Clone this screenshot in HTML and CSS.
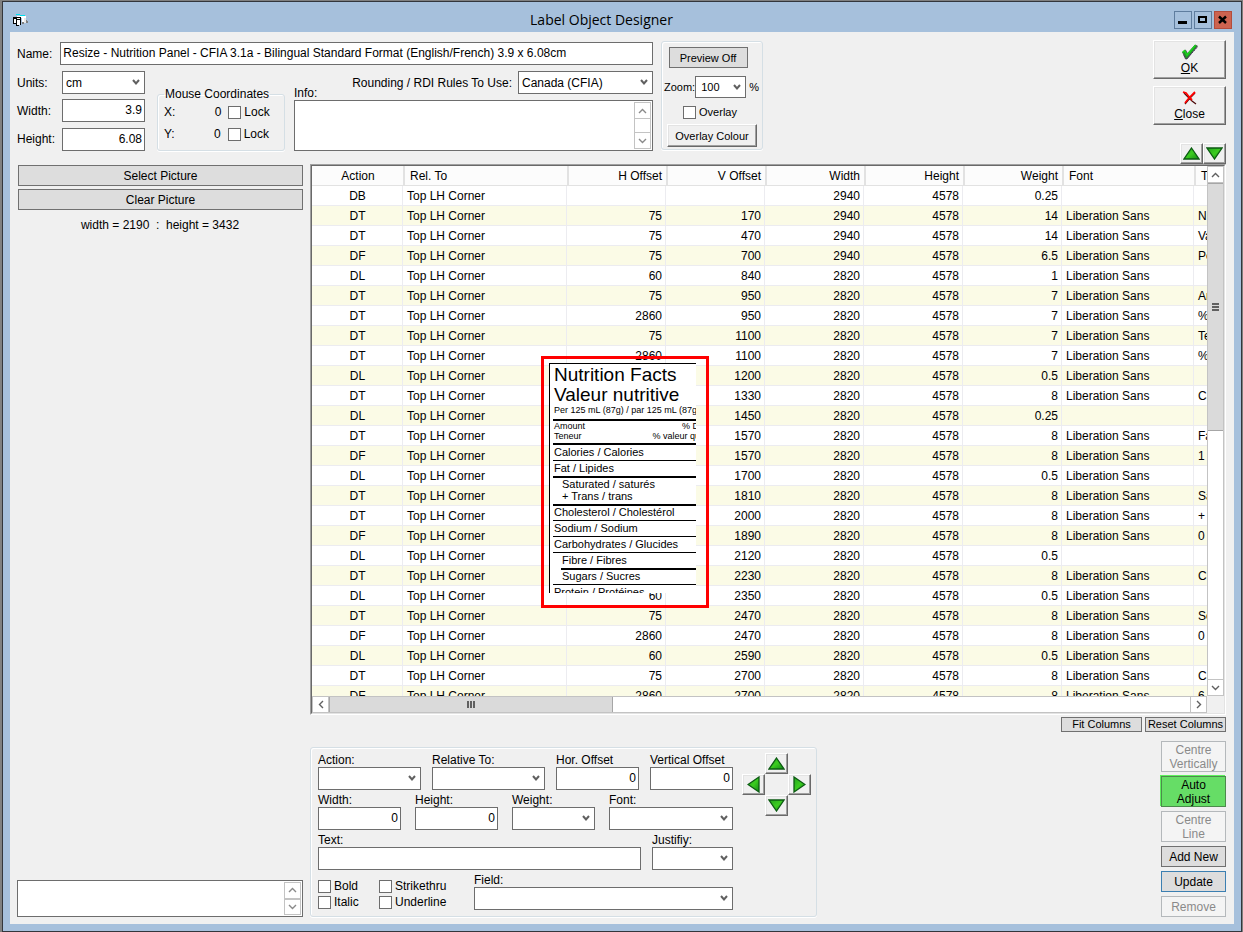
FILE: index.html
```html
<!DOCTYPE html>
<html lang="en">
<head>
    <meta charset="UTF-8">
    <meta name="viewport" content="width=device-width, initial-scale=1.0">
    <title>Label Object Designer</title>
    <link rel="stylesheet" href="styles.css">
</head>
<body>
    <!-- Shared icons -->
    <svg class="icon-defs" aria-hidden="true">
        <defs>
            <linearGradient id="green" x1="0" y1="0" x2="1" y2="1">
                <stop offset="0" stop-color="#22a41c"/>
                <stop offset="0.5" stop-color="#3ccc20"/>
                <stop offset="1" stop-color="#128a14"/>
            </linearGradient>
        </defs>
        <symbol id="arrow-up" viewBox="0 0 17 13">
            <path d="M8.5 1L16 12H1z" fill="url(#green)" stroke="#0b5a12" stroke-width="1.3"/>
        </symbol>
        <symbol id="arrow-down" viewBox="0 0 17 13">
            <path d="M1 1h15L8.500 12z" fill="url(#green)" stroke="#0b5a12" stroke-width="1.3"/>
        </symbol>
        <symbol id="arrow-left" viewBox="0 0 13 17">
            <path d="M12 1v15L1 8.500z" fill="url(#green)" stroke="#0b5a12" stroke-width="1.3"/>
        </symbol>
        <symbol id="arrow-right" viewBox="0 0 13 17">
            <path d="M1 1v15L12 8.500z" fill="url(#green)" stroke="#0b5a12" stroke-width="1.3"/>
        </symbol>
        <symbol id="chevron-up" viewBox="0 0 9 6">
            <path d="M1 5l3.500-3.500L8 5" fill="none" stroke="currentColor" stroke-width="1.4"/>
        </symbol>
        <symbol id="chevron-down" viewBox="0 0 9 6">
            <path d="M1 1l3.500 3.500L8 1" fill="none" stroke="currentColor" stroke-width="1.4"/>
        </symbol>
        <symbol id="chevron-left" viewBox="0 0 6 9">
            <path d="M5 1L1.500 4.500 5 8" fill="none" stroke="currentColor" stroke-width="1.4"/>
        </symbol>
        <symbol id="chevron-right" viewBox="0 0 6 9">
            <path d="M1 1l3.500 3.500L1 8" fill="none" stroke="currentColor" stroke-width="1.4"/>
        </symbol>
    </svg>

    <div class="window">
        <header class="titlebar">
            <svg class="app-icon" viewBox="0 0 16 13" aria-hidden="true" shape-rendering="crispEdges">
                <path d="M4 2h9v7H9V4H4z" fill="#fff"/>
                <path d="M3 0h4v1H3zM7 1h5v1H7z" fill="#00e0f0"/>
                <path d="M13 6h1v1h1v2h-2zM9 8h2v2H9z" fill="#7f7f7f"/>
                <path d="M11 4h2v5h-2z" fill="#e8e8e8"/>
                <path d="M0 3h8v8H6v1H3v-2H0z" fill="#000"/>
                <path d="M1 5h2v4H1zM4 4h3v1H4zM4 6h3v5H4z" fill="#fff"/>
            </svg>
            <h1 class="title">Label Object Designer</h1>
            <div class="window-buttons">
                <button type="button" class="win-btn" aria-label="Minimize">
                    <svg viewBox="0 0 16 16"><path d="M3 9h9v3H3z"/></svg>
                </button>
                <button type="button" class="win-btn" aria-label="Maximize">
                    <svg viewBox="0 0 16 16"><path d="M3 4h9v7H3zM5 6v3h5V6z" fill-rule="evenodd"/></svg>
                </button>
                <button type="button" class="win-btn win-close" aria-label="Close window">
                    <svg viewBox="0 0 16 16"><path d="M4 4.500l7 6.500M11 4.500L4 11" fill="none" stroke="#000" stroke-width="2.400"/></svg>
                </button>
            </div>
        </header>

        <main class="client">
            <section class="top-panel">
                <div class="label-form">
                    <div class="name-row">
                        <label for="name">Name:</label>
                        <input type="text" id="name" value="Resize - Nutrition Panel - CFIA 3.1a - Bilingual Standard Format (English/French) 3.9 x 6.08cm">
                    </div>
                    <div class="detail-row">
                        <div class="size-fields">
                            <label for="units">Units:</label>
                            <select id="units"><option>cm</option></select>
                            <label for="labelWidth">Width:</label>
                            <input type="text" id="labelWidth" class="num" value="3.9">
                            <label for="labelHeight">Height:</label>
                            <input type="text" id="labelHeight" class="num" value="6.08">
                        </div>
                        <fieldset class="mouse-group">
                            <legend>Mouse Coordinates</legend>
                            <div class="mouse-row">
                                <span>X:</span>
                                <span class="mouse-value">0</span>
                                <label class="check"><input type="checkbox">Lock</label>
                            </div>
                            <div class="mouse-row">
                                <span>Y:</span>
                                <span class="mouse-value">0</span>
                                <label class="check"><input type="checkbox">Lock</label>
                            </div>
                        </fieldset>
                        <div class="info-block">
                            <div class="rules-row">
                                <label for="info" class="info-label">Info:</label>
                                <label for="rules" class="rules-label">Rounding / RDI Rules To Use:</label>
                                <select id="rules"><option>Canada (CFIA)</option></select>
                            </div>
                            <div class="memo info-memo">
                                <textarea id="info"></textarea>
                                <div class="memo-scroll">
                                    <span><svg width="9" height="6"><use href="#chevron-up"/></svg></span>
                                    <span><svg width="9" height="6"><use href="#chevron-down"/></svg></span>
                                </div>
                            </div>
                        </div>
                    </div>
                </div>

                <div class="group preview-group">
                    <button type="button" class="btn preview-off">Preview Off</button>
                    <div class="zoom-row">
                        <label for="zoom">Zoom:</label>
                        <select id="zoom"><option>100</option></select>
                        <span>%</span>
                    </div>
                    <label class="check overlay-check"><input type="checkbox">Overlay</label>
                    <button type="button" class="btn-raised overlay-colour">Overlay Colour</button>
                </div>

                <div class="dialog-buttons">
                    <button type="button" class="btn-raised btn-dialog">
                        <svg width="17" height="16" viewBox="0 0 17 16" aria-hidden="true">
                            <path d="M1.500 8l3-2 2 3.500L14 1l2.500 1L6 15H4.500z" fill="#1f9a24" stroke="#4a4a50" stroke-width="0.800"/>
                            <path d="M1.500 8.500l2-2 2.500 4.500L14.500 1" fill="none" stroke="#18d81c" stroke-width="1.300"/>
                            <path d="M3 11.500L5.500 15 16.500 3" fill="none" stroke="#4b2860" stroke-width="0.900" stroke-dasharray="2 1"/>
                        </svg>
                        <span><u>O</u>K</span>
                    </button>
                    <button type="button" class="btn-raised btn-dialog">
                        <svg width="15" height="16" viewBox="0 0 15 16" aria-hidden="true">
                            <path d="M2 3l4 4 4 4 4 3M13 3L8 8l-5 6" fill="none" stroke="#4a0808" stroke-width="1.200"/>
                            <path d="M1 2l3 1 4 5 2 2M13 2L7 8l-4 5" fill="none" stroke="#f00" stroke-width="1.800"/>
                        </svg>
                        <span><u>C</u>lose</span>
                    </button>
                    <div class="order-buttons">
                        <button type="button" class="btn-raised btn-arrow" aria-label="Move up"><svg width="17" height="13"><use href="#arrow-up"/></svg></button>
                        <button type="button" class="btn-raised btn-arrow" aria-label="Move down"><svg width="17" height="13"><use href="#arrow-down"/></svg></button>
                    </div>
                </div>
            </section>

            <div class="workspace">
                <aside class="picture-panel">
                    <button type="button" class="btn">Select Picture</button>
                    <button type="button" class="btn">Clear Picture</button>
                    <p class="picture-size">width = 2190 &nbsp;:&nbsp; height = 3432</p>
                    <div class="memo notes-memo">
                        <textarea aria-label="Notes"></textarea>
                        <div class="memo-scroll">
                            <span><svg width="9" height="6"><use href="#chevron-up"/></svg></span>
                            <span><svg width="9" height="6"><use href="#chevron-down"/></svg></span>
                        </div>
                    </div>
                </aside>

                <section class="objects">
                    <div class="grid-frame">
                        <div class="grid-view">
                            <div class="grid-rows">
                                <table>
                                    <colgroup>
                                        <col class="col-action"><col class="col-rel">
                                        <col class="col-num"><col class="col-num"><col class="col-num"><col class="col-num"><col class="col-num">
                                        <col class="col-font"><col class="col-text">
                                    </colgroup>
                                    <thead>
                                        <tr><th>Action</th><th>Rel. To</th><th>H Offset</th><th>V Offset</th><th>Width</th><th>Height</th><th>Weight</th><th>Font</th><th>Text</th></tr>
                                    </thead>
                                    <tbody>
                                        <tr><td>DB</td><td>Top LH Corner</td><td></td><td></td><td>2940</td><td>4578</td><td>0.25</td><td></td><td></td></tr>
                                        <tr><td>DT</td><td>Top LH Corner</td><td>75</td><td>170</td><td>2940</td><td>4578</td><td>14</td><td>Liberation Sans</td><td>Nu</td></tr>
                                        <tr><td>DT</td><td>Top LH Corner</td><td>75</td><td>470</td><td>2940</td><td>4578</td><td>14</td><td>Liberation Sans</td><td>Va</td></tr>
                                        <tr><td>DF</td><td>Top LH Corner</td><td>75</td><td>700</td><td>2940</td><td>4578</td><td>6.5</td><td>Liberation Sans</td><td>Pe</td></tr>
                                        <tr><td>DL</td><td>Top LH Corner</td><td>60</td><td>840</td><td>2820</td><td>4578</td><td>1</td><td>Liberation Sans</td><td></td></tr>
                                        <tr><td>DT</td><td>Top LH Corner</td><td>75</td><td>950</td><td>2820</td><td>4578</td><td>7</td><td>Liberation Sans</td><td>Am</td></tr>
                                        <tr><td>DT</td><td>Top LH Corner</td><td>2860</td><td>950</td><td>2820</td><td>4578</td><td>7</td><td>Liberation Sans</td><td>%</td></tr>
                                        <tr><td>DT</td><td>Top LH Corner</td><td>75</td><td>1100</td><td>2820</td><td>4578</td><td>7</td><td>Liberation Sans</td><td>Te</td></tr>
                                        <tr><td>DT</td><td>Top LH Corner</td><td>2860</td><td>1100</td><td>2820</td><td>4578</td><td>7</td><td>Liberation Sans</td><td>%</td></tr>
                                        <tr><td>DL</td><td>Top LH Corner</td><td></td><td>1200</td><td>2820</td><td>4578</td><td>0.5</td><td>Liberation Sans</td><td></td></tr>
                                        <tr><td>DT</td><td>Top LH Corner</td><td></td><td>1330</td><td>2820</td><td>4578</td><td>8</td><td>Liberation Sans</td><td>Ca</td></tr>
                                        <tr><td>DL</td><td>Top LH Corner</td><td></td><td>1450</td><td>2820</td><td>4578</td><td>0.25</td><td></td><td></td></tr>
                                        <tr><td>DT</td><td>Top LH Corner</td><td></td><td>1570</td><td>2820</td><td>4578</td><td>8</td><td>Liberation Sans</td><td>Fa</td></tr>
                                        <tr><td>DF</td><td>Top LH Corner</td><td></td><td>1570</td><td>2820</td><td>4578</td><td>8</td><td>Liberation Sans</td><td>1</td></tr>
                                        <tr><td>DL</td><td>Top LH Corner</td><td></td><td>1700</td><td>2820</td><td>4578</td><td>0.5</td><td>Liberation Sans</td><td></td></tr>
                                        <tr><td>DT</td><td>Top LH Corner</td><td></td><td>1810</td><td>2820</td><td>4578</td><td>8</td><td>Liberation Sans</td><td>Sa</td></tr>
                                        <tr><td>DT</td><td>Top LH Corner</td><td></td><td>2000</td><td>2820</td><td>4578</td><td>8</td><td>Liberation Sans</td><td>+</td></tr>
                                        <tr><td>DF</td><td>Top LH Corner</td><td></td><td>1890</td><td>2820</td><td>4578</td><td>8</td><td>Liberation Sans</td><td>0</td></tr>
                                        <tr><td>DL</td><td>Top LH Corner</td><td></td><td>2120</td><td>2820</td><td>4578</td><td>0.5</td><td></td><td></td></tr>
                                        <tr><td>DT</td><td>Top LH Corner</td><td></td><td>2230</td><td>2820</td><td>4578</td><td>8</td><td>Liberation Sans</td><td>Ch</td></tr>
                                        <tr><td>DL</td><td>Top LH Corner</td><td>60</td><td>2350</td><td>2820</td><td>4578</td><td>0.5</td><td>Liberation Sans</td><td></td></tr>
                                        <tr><td>DT</td><td>Top LH Corner</td><td>75</td><td>2470</td><td>2820</td><td>4578</td><td>8</td><td>Liberation Sans</td><td>So</td></tr>
                                        <tr><td>DF</td><td>Top LH Corner</td><td>2860</td><td>2470</td><td>2820</td><td>4578</td><td>8</td><td>Liberation Sans</td><td>0</td></tr>
                                        <tr><td>DL</td><td>Top LH Corner</td><td>60</td><td>2590</td><td>2820</td><td>4578</td><td>0.5</td><td>Liberation Sans</td><td></td></tr>
                                        <tr><td>DT</td><td>Top LH Corner</td><td>75</td><td>2700</td><td>2820</td><td>4578</td><td>8</td><td>Liberation Sans</td><td>Ca</td></tr>
                                        <tr><td>DF</td><td>Top LH Corner</td><td>2860</td><td>2700</td><td>2820</td><td>4578</td><td>8</td><td>Liberation Sans</td><td>6</td></tr>
                                    </tbody>
                                </table>
                            </div>
                            <div class="vscroll">
                                <span class="scroll-end"><svg width="9" height="6"><use href="#chevron-up"/></svg></span>
                                <div class="scroll-track"><div class="scroll-thumb"><i class="grip"></i></div></div>
                                <span class="scroll-end"><svg width="9" height="6"><use href="#chevron-down"/></svg></span>
                            </div>
                            <div class="hscroll">
                                <span class="scroll-end"><svg width="6" height="9"><use href="#chevron-left"/></svg></span>
                                <div class="scroll-track"><div class="scroll-thumb"><i class="grip"></i></div></div>
                                <span class="scroll-end"><svg width="6" height="9"><use href="#chevron-right"/></svg></span>
                            </div>
                        </div>

                        <!-- Floating label preview -->
                        <div class="preview-box">
                            <div class="nutrition">
                                <div class="nf-title">Nutrition Facts</div>
                                <div class="nf-title">Valeur nutritive</div>
                                <div class="nf-serving thick">Per 125 mL (87g) / par 125 mL (87g)</div>
                                <div class="nf-heads thick">
                                    <div><span>Amount</span><span class="nf-daily">% Daily</span></div>
                                    <div><span>Teneur</span><span class="nf-valeur">% valeur quotidienne</span></div>
                                </div>
                                <div class="nf-row">Calories / Calories</div>
                                <div class="nf-row thick">Fat / Lipides</div>
                                <div class="nf-pair thick">Saturated / saturés<br>+ Trans / trans</div>
                                <div class="nf-row nf-short">Cholesterol / Cholestérol</div>
                                <div class="nf-row">Sodium / Sodium</div>
                                <div class="nf-row">Carbohydrates / Glucides</div>
                                <div class="nf-row nf-sub thick">Fibre / Fibres</div>
                                <div class="nf-row nf-short nf-indent">Sugars / Sucres</div>
                                <div class="nf-row">Protein / Protéines</div>
                            </div>
                        </div>
                    </div>

                    <div class="column-buttons">
                        <button type="button" class="btn">Fit Columns</button>
                        <button type="button" class="btn">Reset Columns</button>
                    </div>

                    <div class="editor-row">
                        <div class="group editor">
                            <div class="editor-form">
                                <div class="form-row">
                                    <div class="field w-action"><label for="action">Action:</label><select id="action"></select></div>
                                    <div class="field grow"><label for="relative">Relative To:</label><select id="relative"></select></div>
                                    <div class="field"><label for="hor">Hor. Offset</label><input type="text" id="hor" class="num" value="0"></div>
                                    <div class="field"><label for="ver">Vertical Offset</label><input type="text" id="ver" class="num" value="0"></div>
                                </div>
                                <div class="form-row wide-gap">
                                    <div class="field"><label for="objWidth">Width:</label><input type="text" id="objWidth" class="num" value="0"></div>
                                    <div class="field"><label for="objHeight">Height:</label><input type="text" id="objHeight" class="num" value="0"></div>
                                    <div class="field"><label for="weight">Weight:</label><select id="weight"></select></div>
                                    <div class="field grow"><label for="font">Font:</label><select id="font"></select></div>
                                </div>
                                <div class="form-row">
                                    <div class="field grow"><label for="text">Text:</label><input type="text" id="text"></div>
                                    <div class="field w-justify"><label for="justify">Justifiy:</label><select id="justify"></select></div>
                                </div>
                                <div class="form-row">
                                    <div class="style-checks">
                                        <label class="check"><input type="checkbox">Bold</label>
                                        <label class="check"><input type="checkbox">Strikethru</label>
                                        <label class="check"><input type="checkbox">Italic</label>
                                        <label class="check"><input type="checkbox">Underline</label>
                                    </div>
                                    <div class="field grow"><label for="field">Field:</label><select id="field"></select></div>
                                </div>
                            </div>
                            <div class="nudge-pad">
                                <button type="button" class="btn-raised btn-arrow nudge-up" aria-label="Nudge up"><svg width="17" height="13"><use href="#arrow-up"/></svg></button>
                                <button type="button" class="btn-raised btn-arrow nudge-left" aria-label="Nudge left"><svg width="13" height="17"><use href="#arrow-left"/></svg></button>
                                <button type="button" class="btn-raised btn-arrow nudge-right" aria-label="Nudge right"><svg width="13" height="17"><use href="#arrow-right"/></svg></button>
                                <button type="button" class="btn-raised btn-arrow nudge-down" aria-label="Nudge down"><svg width="17" height="13"><use href="#arrow-down"/></svg></button>
                            </div>
                        </div>

                        <div class="object-buttons">
                            <button type="button" class="btn btn-tall" disabled>Centre<br>Vertically</button>
                            <button type="button" class="btn btn-tall btn-green">Auto<br>Adjust</button>
                            <button type="button" class="btn btn-tall" disabled>Centre<br>Line</button>
                            <button type="button" class="btn">Add New</button>
                            <button type="button" class="btn btn-default">Update</button>
                            <button type="button" class="btn" disabled>Remove</button>
                        </div>
                    </div>
                </section>
            </div>
        </main>
    </div>
</body>
</html>
```

FILE: styles.css
```css
* {
    margin: 0;
    padding: 0;
    box-sizing: border-box;
}

body {
    height: 100vh;
    padding: 1px 1px 0 2px;
    background: #808080;
    font-family: "Liberation Sans", Arial, sans-serif;
    font-size: 12px;
    line-height: 14px;
    color: #000;
    overflow: hidden;
}

button,
input,
select,
textarea {
    font: inherit;
    color: inherit;
}

svg {
    display: block;
}

.icon-defs {
    position: absolute;
    width: 0;
    height: 0;
}

/* Window chrome */
.window {
    display: flex;
    flex-direction: column;
    height: 100%;
    padding: 0 7px 7px;
    border: 1px solid #33363c;
    background: #a6c0dc;
}

.titlebar {
    display: flex;
    align-items: center;
    height: 30px;
    padding: 6px 2px 0 3px;
}

.app-icon {
    width: 16px;
    height: 13px;
}

.title {
    flex: 1;
    font-family: "Open Sans", "Noto Sans", sans-serif;
    font-size: 14px;
    font-weight: normal;
    line-height: 18px;
    text-align: center;
}

.window-buttons {
    display: flex;
    gap: 2px;
}

.win-btn {
    width: 18px;
    height: 18px;
    border: 1px solid #5f7d9e;
    background: #a6c0dc;
}

.win-close {
    border-color: #b34c3c;
    background: #cd6350;
}

.client {
    flex: 1;
    min-height: 0;
    display: flex;
    flex-direction: column;
    padding: 8px 8px 7px 7px;
    background: #f0f0f0;
}

/* Controls */
input[type="text"],
select,
textarea {
    border: 1px solid #6d6d6d;
    border-radius: 0;
    background-color: #fff;
    outline: none;
}

input[type="text"],
select {
    width: 100%;
    height: 23px;
    padding: 0 2px 1px;
}

.num {
    text-align: right;
}

select {
    appearance: none;
    padding: 0 3px;
    background-image: url("data:image/svg+xml,%3Csvg xmlns='http://www.w3.org/2000/svg' width='8' height='7'%3E%3Cpath d='M1 1l3 3.500L7 1' fill='none' stroke='%23606060' stroke-width='2'/%3E%3C/svg%3E");
    background-repeat: no-repeat;
    background-position: right 4px center;
}

input[type="checkbox"] {
    appearance: none;
    width: 13px;
    height: 13px;
    border: 1px solid #6d6d6d;
    background: #fff;
}

.check {
    display: flex;
    align-items: center;
    gap: 3px;
}

.btn {
    height: 21px;
    border: 1px solid #707070;
    background: #dddddd;
}

.btn:disabled {
    border-color: #b4b8bb;
    background: #f4f4f4;
    color: #8a8a8a;
}

.btn-raised {
    display: flex;
    align-items: center;
    justify-content: center;
    border: 1px solid;
    border-color: #fff #696969 #696969 #fff;
    background: #f0f0f0;
    box-shadow: inset -1px -1px #a0a0a0, inset 1px 1px #e3e3e3;
}

.group,
.mouse-group {
    border: 1px solid #d5dfe5;
    border-radius: 3px;
    box-shadow: inset 1px 1px #fff, 0 1px #fff;
}

/* Multi-line boxes with their own scroll arrows */
.memo {
    display: flex;
    border: 1px solid #6d6d6d;
    background: #fff;
}

.memo textarea {
    flex: 1;
    min-width: 0;
    height: 100%;
    border: 0;
    resize: none;
}

.memo-scroll {
    display: flex;
    flex-direction: column;
    justify-content: space-between;
    width: 17px;
    margin: 1px;
    border: 1px solid #c3c3c3;
    color: #8a8a8a;
}

.memo-scroll span {
    display: flex;
    align-items: center;
    justify-content: center;
    height: 16px;
    border-bottom: 1px solid #c3c3c3;
}

.memo-scroll span:last-child {
    border-top: 1px solid #c3c3c3;
    border-bottom: 0;
}

/* Top panel */
.top-panel {
    display: flex;
    align-items: flex-start;
    height: 124px;
}

.label-form {
    width: 636px;
    padding-top: 2px;
}

.name-row {
    display: flex;
    align-items: center;
    gap: 8px;
    margin-bottom: 6px;
}

.name-row input {
    flex: 1;
}

.detail-row {
    display: flex;
}

.size-fields {
    display: grid;
    grid-template-columns: 45px 83px;
    row-gap: 5px;
    align-items: center;
}

.mouse-group {
    align-self: flex-end;
    width: 128px;
    height: 64px;
    margin: 0 9px 0 12px;
    padding: 0 6px;
}

.mouse-group legend {
    padding: 0 1px;
}

.mouse-row {
    display: flex;
    align-items: center;
    height: 22px;
}

.mouse-value {
    width: 46px;
    margin-right: 7px;
    text-align: right;
}

.info-block {
    flex: 1;
}

.rules-row {
    display: flex;
    justify-content: space-between;
    height: 29px;
}

.info-label {
    align-self: flex-end;
}

.rules-label {
    margin-left: auto;
    padding: 5px 6px 0 0;
}

.rules-row select {
    width: 135px;
}

.info-memo {
    height: 51px;
}

.preview-group {
    display: flex;
    flex-direction: column;
    align-items: center;
    width: 102px;
    height: 109px;
    margin: 1px 0 0 8px;
    padding: 5px 2px 0;
    font-size: 11px;
}

.preview-off {
    width: 79px;
    margin: 0 8px 8px 0;
}

.zoom-row {
    display: flex;
    align-items: center;
    align-self: stretch;
}

.zoom-row select {
    width: 51px;
    height: 22px;
    margin-right: 3px;
    padding: 0 5px 1px;
}

.overlay-check {
    margin: 7px 4px 5px 0;
}

.overlay-colour {
    width: 90px;
    height: 23px;
}

.dialog-buttons {
    display: flex;
    flex-direction: column;
    align-items: flex-end;
    gap: 7px;
    margin-left: auto;
}

.btn-dialog {
    flex-direction: column;
    gap: 1px;
    width: 73px;
    height: 39px;
}

.order-buttons {
    display: flex;
    margin-top: 11px;
}

.btn-arrow {
    width: 23px;
    height: 21px;
}

/* Workspace */
.workspace {
    flex: 1;
    min-height: 0;
    display: flex;
    gap: 7px;
}

.picture-panel {
    display: flex;
    flex-direction: column;
    gap: 3px;
    width: 286px;
    padding-top: 1px;
}

.picture-panel .btn {
    margin-left: 1px;
}

.picture-size {
    padding: 5px;
    text-align: center;
}

.notes-memo {
    height: 37px;
    margin-top: auto;
}

.objects {
    flex: 1;
    min-width: 0;
    display: flex;
    flex-direction: column;
}

/* Object grid */
.grid-frame {
    position: relative;
    flex: 1;
    min-height: 0;
    border: 1px solid;
    border-color: #a0a0a0 #fff #fff #a0a0a0;
}

.grid-view {
    display: grid;
    grid-template-columns: 1fr 17px;
    grid-template-rows: 1fr 17px;
    height: 100%;
    border: 1px solid;
    border-color: #696969 #e3e3e3 #e3e3e3 #696969;
}

.grid-rows {
    min-width: 0;
    min-height: 0;
    overflow: hidden;
    background: #fff;
}

table {
    width: 980px;
    table-layout: fixed;
    border-collapse: separate;
    border-spacing: 0;
}

.col-action {
    width: 91px;
}

.col-rel {
    width: 164px;
}

.col-num {
    width: 99px;
}

.col-font {
    width: 132px;
}

th,
td {
    height: 20px;
    padding: 0 3px 0 4px;
    border-right: 1px solid #ececf0;
    border-bottom: 1px solid #ececf0;
    text-align: right;
    white-space: nowrap;
    overflow: hidden;
}

th {
    padding: 0 4px 0 5px;
    border-right: 0;
    border-bottom-color: #e2e2e2;
    border-left: 2px solid #e2e2e2;
    background: #fcfcfc;
    font-weight: normal;
}

th:first-child {
    border-left: 0;
}

tbody tr:nth-child(even) {
    background: #fbfbe6;
}

th:nth-child(1),
td:nth-child(1) {
    text-align: center;
}

th:nth-child(2),
td:nth-child(2),
th:nth-child(n+8),
td:nth-child(n+8) {
    text-align: left;
}

/* Scroll bars */
.vscroll,
.hscroll {
    display: flex;
    background: #fff;
    color: #606060;
}

.vscroll {
    flex-direction: column;
}

.scroll-end {
    display: flex;
    align-items: center;
    justify-content: center;
    width: 17px;
    height: 17px;
    border: 1px solid #c3c3c3;
}

.scroll-track {
    flex: 1;
    border: 1px solid #c3c3c3;
    border-width: 0 1px;
}

.hscroll .scroll-track {
    border-width: 1px 0;
}

.scroll-thumb {
    display: flex;
    align-items: center;
    justify-content: center;
    height: 50%;
    border: 1px solid #a6a6a6;
    border-width: 1px 0;
    background: #dadada;
}

.hscroll .scroll-thumb {
    width: 33%;
    height: 100%;
    border-width: 0 1px;
}

.grip {
    width: 7px;
    height: 8px;
    background: repeating-linear-gradient(#606060 0 2px, transparent 2px 3px);
}

.hscroll .grip {
    width: 8px;
    height: 7px;
    background: repeating-linear-gradient(90deg, #606060 0 2px, transparent 2px 3px);
}

/* Label preview over the grid */
.preview-box {
    position: absolute;
    top: 191px;
    left: 230px;
    width: 168px;
    height: 252px;
    padding: 4px 5px;
    border: 3px solid #f00;
}

.nutrition {
    width: 147px;
    height: 230px;
    padding-left: 3px;
    border-top: 1px solid #000;
    border-left: 1px solid #000;
    background: #fff;
    overflow: hidden;
    white-space: nowrap;
}

.nf-title {
    height: 20px;
    padding-left: 1px;
    font-size: 19px;
    line-height: 21px;
}

.nf-serving {
    height: 17px;
    padding-left: 1px;
    font-size: 9px;
    line-height: 12px;
}

.nf-heads {
    height: 24px;
    padding-left: 1px;
    font-size: 9px;
    line-height: 10px;
}

.nf-heads div {
    display: flex;
}

.nf-daily {
    margin-left: 97px;
}

.nf-valeur {
    margin-left: 71px;
}

.nf-row {
    height: 16px;
    padding-left: 1px;
    border-bottom: 1px solid #000;
    font-size: 11px;
    line-height: 14px;
}

.nf-row.thick {
    height: 17px;
}

.nf-short {
    height: 15px;
    line-height: 12px;
}

.nf-pair {
    height: 28px;
    padding-left: 9px;
    font-size: 11px;
    line-height: 12px;
}

.nf-indent {
    padding-left: 9px;
}

.nf-sub {
    margin-left: 8px;
}

.thick {
    border-bottom: 2px solid #000;
}

/* Below the grid */
.column-buttons {
    display: flex;
    justify-content: flex-end;
    gap: 3px;
    margin: 2px 0 9px;
}

.column-buttons .btn {
    width: 81px;
    height: 15px;
    font-size: 11px;
    line-height: 13px;
}

.editor-row {
    display: flex;
    align-items: flex-end;
    justify-content: space-between;
}

.editor {
    display: flex;
    gap: 9px;
    padding: 5px 5px 6px 7px;
}

.editor-form {
    display: flex;
    flex-direction: column;
    gap: 3px;
    width: 415px;
}

.form-row {
    display: flex;
    gap: 11px;
}

.wide-gap {
    gap: 14px;
}

.field {
    width: 83px;
}

.field label {
    display: block;
    height: 14px;
}

.w-action {
    width: 103px;
}

.w-justify {
    width: 81px;
}

.grow {
    flex: 1;
}

.style-checks {
    display: grid;
    grid-template-columns: 61px 84px;
    grid-auto-rows: 16px;
    align-content: end;
}

.nudge-pad {
    display: grid;
    grid-template-columns: repeat(3, 23px);
    grid-template-rows: repeat(3, 21px);
    align-content: start;
}

.nudge-up {
    grid-area: 1 / 2;
}

.nudge-left {
    grid-area: 2 / 1;
}

.nudge-right {
    grid-area: 2 / 3;
}

.nudge-down {
    grid-area: 3 / 2;
}

.object-buttons {
    display: flex;
    flex-direction: column;
    gap: 4px;
    width: 65px;
}

.btn-tall {
    height: 31px;
}

.btn-green {
    border-color: #4c8a4c;
    background: #66dd66;
    box-shadow: -1px -1px #5cf05c;
}

.btn-default {
    border-color: #3c7fb1;
}
```
